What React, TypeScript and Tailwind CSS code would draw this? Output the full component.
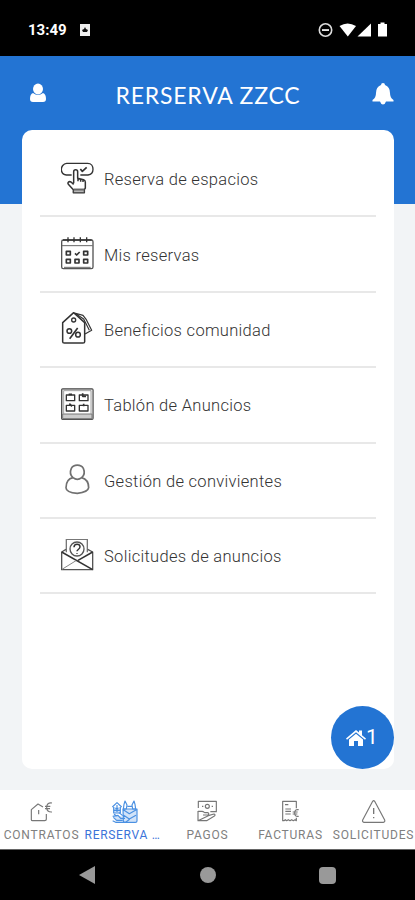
import type { ReactNode } from "react";

const rows: { label: string; box: string; icon: ReactNode }[] = [
  {
    label: "Reserva de espacios",
    box: "33 37 99 99",
    icon: (
      <>
        <path d="M65 76H49C39 75 34 67 34 59S40 42 50 41H113C124 41 129 50 129 59S124 75 114 76H91" strokeWidth="4" />
        <path d="M91 58l6 7 13-12" strokeWidth="5" />
        <path d="M71 101V66c0-8 12-8 12 0v20l18 4c4 1 5 4 5 8v17l-3 5v9H70v-9L55 104c-4-6 2-10 8-7l8 7M70 120h33M84 87v8M92 89v7M99 91v6" strokeWidth="4.5" />
        <path d="M71 115h32v14H71z" fill="#888" stroke="none" opacity=".6" />
      </>
    ),
  },
  {
    label: "Mis reservas",
    box: "33 38 99 99",
    icon: (
      <>
        <rect x="35" y="47" width="94" height="86" rx="5" stroke="#555" strokeWidth="4" />
        <path d="M36 64h92M42 129h80" stroke="#666" />
        <path d="M39 47h86M54 39v15M72 39v15M91 39v15M110 39v15" strokeWidth="4" />
        <path d="M49 81h12v11H49zM101 81h12v11h-12zM49 105h12v11H49zM75 105h12v11H75zM101 105h12v11h-12zM75 87l5 5 9-9" strokeWidth="5" />
      </>
    ),
  },
  {
    label: "Beneficios comunidad",
    box: "33 40 99 99",
    icon: (
      <>
        <path d="M38 72l33-30 33 30v57q0 4-5 4H43q-5 0-5-4z" strokeWidth="4.5" />
        <path d="M74 43l25 7 10 13 16 32-20 11M75 44l26 17 17 34" strokeWidth="3.5" />
        <circle cx="71" cy="64" r="6" strokeWidth="4" />
        <circle cx="58" cy="97" r="7" strokeWidth="4.5" />
        <circle cx="84" cy="108" r="7" strokeWidth="4.5" />
        <path d="M83 88L59 120" strokeWidth="5" />
      </>
    ),
  },
  {
    label: "Tablón de Anuncios",
    box: "33 40 99 99",
    icon: (
      <>
        <rect x="35" y="43" width="94" height="91" rx="3" strokeWidth="4" stroke="#444" />
        <path d="M37 45h90v87H37z" stroke="#aaa" strokeWidth="2" />
        <path d="M38 118h88v14H38z" fill="#ccc" stroke="#777" />
        <path d="M41 117V48h82v69" stroke="#777" strokeWidth="2" />
        <path d="M49 61h25v17H49zM88 61h26v17H88zM49 92h25v17H49zM88 92h26v17H88z" strokeWidth="4" />
        <path d="M56 59h10M98 56v9h10M58 87l8 8M101 87v8" strokeWidth="5" />
      </>
    ),
  },
  {
    label: "Gestión de convivientes",
    box: "33 28 99 99",
    icon: (
      <path d="M69 72C61 65 60 53 64 44c7-13 29-13 36 0 4 9 3 21-5 28 14 4 21 14 21 30-1 8-8 14-34 17-24-2-34-8-34-17 0-16 8-27 21-30zM69 72q13 10 26 0" strokeWidth="5" stroke="#707070" />
    ),
  },
  {
    label: "Solicitudes de anuncios",
    box: "33 29 99 99",
    icon: (
      <>
        <path d="M49 69V30h63v39" stroke="#777" strokeWidth="4" />
        <circle cx="81" cy="59" r="21" stroke="#555" strokeWidth="4" />
        <path d="M72 54c0-13 19-12 18-1-1 8-9 7-9 13M81 71v2" strokeWidth="4.5" />
        <path d="M48 60L35 68v53h93V68l-15-8" stroke="#555" strokeWidth="4" />
        <path d="M35 68l93 53M128 68L84 93" strokeWidth="4.5" />
        <path d="M36 120l42-26" stroke="#888" />
      </>
    ),
  },
];

const tabs: { label: string; box: string; active?: boolean; icon: ReactNode }[] = [
  {
    label: "CONTRATOS",
    box: "84 60 81 72",
    icon: (
      <>
        <path d="M129 81l-15-9-20 17v30q0 3 4 3h36q5 0 5-4v-16" />
        <path d="M116 90v13" />
        <path d="M156 69q-16-2-16 13t16 14M135 79h16M135 86h15" />
      </>
    ),
  },
  {
    label: "RERSERVA …",
    box: "333 60 81 72",
    active: true,
    icon: (
      <>
        <path d="M369 87h42v38h-42zM341 81h20v18h-20zM340 108h24l8 17h-24z" fill="#4a90e2" fillOpacity=".25" stroke="none" />
        <path d="M337 81l14-13 14 13M341 81v18h20V81M346 86h9M351 75v21M341 91h20" />
        <path d="M372 73l3-10 6 12-2 12h-9zM405 73l-3-10-6 12 2 12h9z" />
        <path d="M369 87h42v36q0 4-5 4h-31q-5 0-5-4zM370 89l18 12 21-12M371 106l17 11 20-11M382 79h14" />
        <path d="M338 109l16-3 8 9h13M338 122l9 5h30l12-9M340 112l10 9h18M357 98l11 9M342 103l9 5" />
      </>
    ),
  },
  {
    label: "PAGOS",
    box: "-33 60 81 72",
    icon: (
      <>
        <path d="M-20 84V64h54v31H16" />
        <circle cx="7" cy="79" r="6" />
        <path d="M-9 79h4M20 79h4" strokeWidth="4" />
        <path d="M-21 94h12q3 0 8 4h9q5 1 2 7H-6M10 107l17-5q6 2 0 7L5 122h-26zM-21 93v29" />
      </>
    ),
  },
  {
    label: "FACTURAS",
    box: "216 60 81 72",
    icon: (
      <>
        <path d="M274 85V64h-41v58h4l4-3 4 3 5-3 5 3 5-3 5 3 5-3 4 3v-9" />
        <path d="M240 74h10M241 87h17M241 94h17M241 102h16" />
        <path d="M281 89q-12-2-12 10t12 10M263 96h15M263 102h14" />
      </>
    ),
  },
  {
    label: "SOLICITUDES",
    box: "465 60 81 72",
    icon: (
      <>
        <path d="M503 64q3-4 6 0l30 56q2 6-4 7h-58q-6-1-4-7z" />
        <path d="M506 84v18M506 111v4" strokeWidth="4" />
      </>
    ),
  },
];

function StatusBar() {
  return (
    <div className="flex h-14 items-center bg-black pt-1 pr-6 pl-7 text-white">
      <span className="w-[38px] font-[Roboto] text-[15px] leading-5 font-bold">13:49</span>
      <svg className="ml-[13px] h-3 w-3" viewBox="0 0 12 12">
        <path d="M1 0h10v12H1z" fill="#eee" />
        <path d="M6 3l1 2 2 1-1 2H4L3 6l2-1z" fill="#111" />
      </svg>
      <svg className="ml-auto h-4 w-[73px]" viewBox="0 0 73 16" fill="#fff">
        <circle cx="7.5" cy="8" r="6.2" fill="none" stroke="#ddd" strokeWidth="1.6" />
        <path d="M4 7.2h7v1.7H4z" />
        <path d="M21.500 4q8-5 16.500 0l-8.200 10.500z" />
        <path d="M53 1.500v13H39.500z" />
        <path d="M60 2h2.500V.5h4V2H69v12.500h-9z" />
      </svg>
    </div>
  );
}

export default function App() {
  return (
    <div className="flex h-[900px] w-[415px] flex-col overflow-hidden bg-[#f2f4f6]">
      <StatusBar />
      <header className="flex h-[148px] shrink-0 items-start justify-between bg-[#2374d3] px-[29px] pt-[25px] text-white">
        <svg className="mt-0.5 h-[21px] w-[18px]" viewBox="0 0 18 21" fill="#fff">
          <ellipse cx="9" cy="6" rx="5" ry="5.400" />
          <path d="M4 10q5 4 10 0 3 1 3 6 0 3-3 3H4q-3 0-3-3 0-5 3-6z" />
        </svg>
        <h1 className="-ml-[3px] font-[Lato] text-[23px] leading-7 tracking-[0.8px] whitespace-nowrap">RERSERVA ZZCC</h1>
        <svg className="-mr-2 mt-px h-6 w-[22px]" viewBox="0 0 22 24" fill="#fff">
          <path d="M11 1q2 0 2 2 5 2 5 8 0 5 3.500 7v1.500H14q-1 3-3 3t-3-3H.5V18Q4 16 4 11q0-6 5-8 0-2 2-2z" />
        </svg>
      </header>
      <main className="relative mx-auto -mt-[74px] h-[639px] w-[372px] shrink-0 rounded-[10px] bg-white px-[18px] pt-3">
        {rows.map((r) => (
          <div key={r.label} className="flex h-[75.4px] items-center border-b-2 border-[#e8e8e8] pl-[21px]">
            <svg className="-mt-px h-[33px] w-[33px] shrink-0" viewBox={r.box} fill="none" stroke="#333" strokeWidth="3" strokeLinejoin="round">
              {r.icon}
            </svg>
            <span className="mt-1 ml-[10.5px] font-[Roboto] text-[16.5px] font-light tracking-[0.3px] whitespace-nowrap text-[#333]">{r.label}</span>
          </div>
        ))}
        <button className="absolute right-0 bottom-0 flex h-[63px] w-[63px] items-center justify-center rounded-full bg-[#2374d3] pt-px font-[Roboto] text-[21px] text-white">
          <svg className="h-[18px] w-5" viewBox="0 0 20 18" fill="#fff">
            <path d="M0 9.500L10 1l3 2.600V1.500h3v4.700l4 3.300-1 1.200-9-7.500-9 7.500z" />
            <path d="M3 10.500l7-5.800 7 5.800V17h-5v-5H8v5H3z" />
          </svg>
          <span>1</span>
        </button>
      </main>
      <nav className="mt-[21px] grid h-[60px] shrink-0 grid-cols-5 border-b border-[#666] bg-white">
        {tabs.map((t) => (
          <div
            key={t.label}
            className={"flex flex-col items-center pt-2.5 font-[Roboto] text-[12px] " + (t.active ? "text-[#3b73d9]" : "text-[#808080]")}
          >
            <svg className="h-6 w-[27px] shrink-0" viewBox={t.box} fill="none" stroke={t.active ? "#4a90e2" : "#777"} strokeWidth="3.5" strokeLinejoin="round">
              {t.icon}
            </svg>
            <span className={"mt-[3px] leading-4 whitespace-nowrap " + (t.active ? "-ml-1 tracking-[0.7px]" : "tracking-[0.8px]")}>{t.label}</span>
          </div>
        ))}
      </nav>
      <div className="flex flex-1 items-center justify-between bg-black px-[79px]">
        <svg className="h-[18px] w-[17px]" viewBox="0 0 17 18" fill="#999"><path d="M16 0v18L0 9z" /></svg>
        <span className="h-4 w-4 rounded-full bg-[#999]" />
        <span className="h-[17px] w-[17px] rounded-sm bg-[#999]" />
      </div>
    </div>
  );
}
